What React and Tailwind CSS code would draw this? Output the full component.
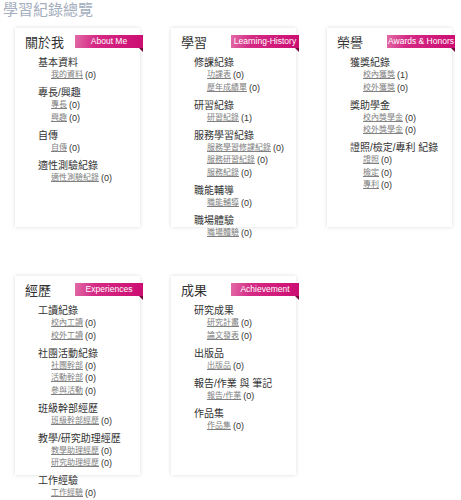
import React from 'react';

// Overview data: each card has a title, an English badge and groups of links
const cards = [
    {
        title: '關於我',
        badge: 'About Me',
        groups: [
            { name: '基本資料', links: [['我的資料', 0]] },
            { name: '專長/興趣', links: [['專長', 0], ['興趣', 0]] },
            { name: '自傳', links: [['自傳', 0]] },
            { name: '適性測驗紀錄', links: [['適性測驗紀錄', 0]] },
        ],
    },
    {
        title: '學習',
        badge: 'Learning-History',
        groups: [
            { name: '修課紀錄', links: [['功課表', 0], ['歷年成績單', 0]] },
            { name: '研習紀錄', links: [['研習紀錄', 1]] },
            { name: '服務學習紀錄', links: [['服務學習修課紀錄', 0], ['服務研習紀錄', 0], ['服務紀錄', 0]] },
            { name: '職能輔導', links: [['職能輔導', 0]] },
            { name: '職場體驗', links: [['職場體驗', 0]] },
        ],
    },
    {
        title: '榮譽',
        badge: 'Awards & Honors',
        groups: [
            { name: '獲獎紀錄', links: [['校內獲獎', 1], ['校外獲獎', 0]] },
            { name: '獎助學金', links: [['校內獎學金', 0], ['校外獎學金', 0]] },
            { name: '證照/檢定/專利 紀錄', links: [['證照', 0], ['檢定', 0], ['專利', 0]] },
        ],
    },
    {
        title: '經歷',
        badge: 'Experiences',
        groups: [
            { name: '工讀紀錄', links: [['校內工讀', 0], ['校外工讀', 0]] },
            { name: '社團活動紀錄', links: [['社團幹部', 0], ['活動幹部', 0], ['參與活動', 0]] },
            { name: '班級幹部經歷', links: [['班級幹部經歷', 0]] },
            { name: '教學/研究助理經歷', links: [['教學助理經歷', 0], ['研究助理經歷', 0]] },
            { name: '工作經驗', links: [['工作經驗', 0]] },
        ],
    },
    {
        title: '成果',
        badge: 'Achievement',
        groups: [
            { name: '研究成果', links: [['研究計畫', 0], ['論文發表', 0]] },
            { name: '出版品', links: [['出版品', 0]] },
            { name: '報告/作業 與 筆記', links: [['報告/作業', 0]] },
            { name: '作品集', links: [['作品集', 0]] },
        ],
    },
];

const Badge = ({ text }) => (
    <div className="absolute top-[7px] right-[-3px] w-[68px]">
        <div className="h-[13px] px-[2px] flex items-center justify-center whitespace-nowrap text-white text-[8.5px] leading-[13px] bg-[linear-gradient(100deg,#e26aa6_0%,#d42a84_30%,#cc0d72_100%)]">
            {text}
        </div>
        {/* ribbon fold */}
        <div className="absolute right-0 top-[13px] w-0 h-0 border-t-[4px] border-t-[#74093f] border-l-[4px] border-l-transparent" />
    </div>
);

const Card = ({ card }) => (
    <div className="relative h-[199px] bg-white shadow-[0_0_4px_rgba(0,0,0,0.14)] pt-[7px]">
        <Badge text={card.badge} />
        <div className="pl-[10px] h-[16px] leading-[16px] text-[13px] text-[#333]">{card.title}</div>
        <div className="mt-[5px] flex flex-col gap-[4.5px]">
            {card.groups.map((g) => (
                <div key={g.name} className="pl-[23px] flex flex-col">
                    <div className="h-[13px] text-[10px] leading-[13px] text-[#333] whitespace-nowrap">{g.name}</div>
                    {g.links.map(([label, count]) => (
                        <div key={label} className="h-[12.5px] pl-[13px] flex items-center gap-[2px] whitespace-nowrap text-[8px] leading-[12.5px]">
                            <a href="#" className="text-[#808080] underline">{label}</a>
                            <span className="text-[9px] text-[#333]">({count})</span>
                        </div>
                    ))}
                </div>
            ))}
        </div>
    </div>
);

export default function App() {
    return (
        <div className="w-[461px] h-[500px] bg-white overflow-hidden font-['Liberation_Sans','Noto_Sans_CJK_TC',sans-serif]">
            <h1 className="pl-[3px] h-[19px] leading-[19px] text-[15px] text-[#a4aebd] font-normal">學習紀錄總覽</h1>
            <div className="mt-[9px] pl-[15px] grid grid-cols-[125px_125px_125px] gap-x-[31px] gap-y-[49px]">
                {cards.map((c) => (
                    <Card key={c.title} card={c} />
                ))}
            </div>
        </div>
    );
}
